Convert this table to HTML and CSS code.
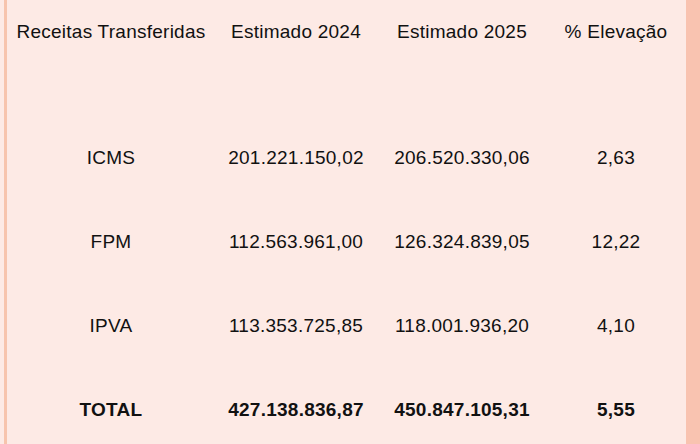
FILE: index.html
```html
<!DOCTYPE html>
<html lang="pt">
<head>
<meta charset="utf-8">
<link rel="stylesheet" href="styles.css">
</head>
<body>
<div class="frame">
  <div class="table">
    <div class="cell head">Receitas Transferidas</div>
    <div class="cell head">Estimado 2024</div>
    <div class="cell head">Estimado 2025</div>
    <div class="cell head">% Elevação</div>

    <div class="cell">ICMS</div>
    <div class="cell">201.221.150,02</div>
    <div class="cell">206.520.330,06</div>
    <div class="cell">2,63</div>

    <div class="cell">FPM</div>
    <div class="cell">112.563.961,00</div>
    <div class="cell">126.324.839,05</div>
    <div class="cell">12,22</div>

    <div class="cell">IPVA</div>
    <div class="cell">113.353.725,85</div>
    <div class="cell">118.001.936,20</div>
    <div class="cell">4,10</div>

    <div class="cell total">TOTAL</div>
    <div class="cell total">427.138.836,87</div>
    <div class="cell total">450.847.105,31</div>
    <div class="cell total">5,55</div>
  </div>
  <div class="side"></div>
</div>
</body>
</html>
```
FILE: styles.css
```css
html, body {
  margin: 0;
  padding: 0;
  background: #fdeae5;
}
.frame {
  display: flex;
  width: 700px;
  height: 444px;
  overflow: hidden;
  background: #fdeae5;
}
.table {
  flex: 1;
  display: grid;
  grid-template-columns: 208px 162px 170px 138px;
  grid-template-rows: 116px 84px 84px 84px 84px;
  align-content: start;
  border-left: 3px solid #f7c4ad;
  margin-left: 4px;
  font-family: "Liberation Sans", Arial, sans-serif;
  font-size: 19px;
  letter-spacing: 0.25px;
  color: #111;
}
.cell {
  display: flex;
  align-items: center;
  justify-content: center;
  white-space: nowrap;
}
.cell.head {
  padding-bottom: 52px;
}
.total {
  font-weight: bold;
}
.side {
  width: 14px;
  background: #f9c3b0;
}
```
